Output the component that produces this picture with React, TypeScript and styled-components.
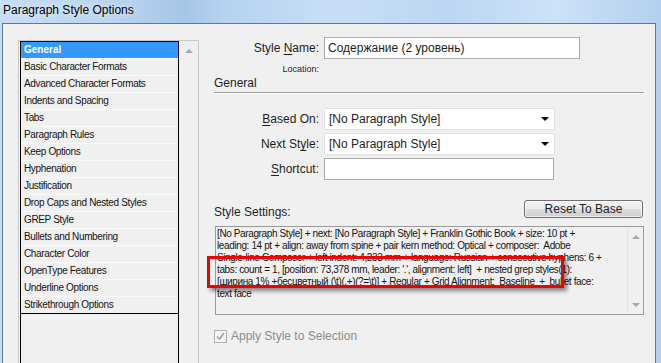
import styled, { createGlobalStyle } from "styled-components";

const GlobalStyle = createGlobalStyle`
  html, body {
    margin: 0;
    padding: 0;
    width: 661px;
    height: 363px;
    overflow: hidden;
  }
  body {
    font-family: "Liberation Sans", Arial, sans-serif;
    color: #1e1e1e;
  }
`;

const Window = styled.div`
  width: 661px;
  height: 363px;
  display: flex;
  flex-direction: column;
  background: linear-gradient(
    90deg,
    #c6ddf3 0%,
    #b9d4ef 18%,
    #a7c5e6 28%,
    #b6d2ef 34%,
    #c7dff6 50%,
    #bcd7f2 68%,
    #cbe2f8 84%,
    #b4d0ee 100%
  );
`;

const TitleBar = styled.div`
  height: 23px;
  line-height: 21px;
  padding-left: 3px;
  font-size: 12px;
  color: #000;
  text-shadow: 0 0 6px rgba(255, 255, 255, 0.9);
`;

const Body = styled.div`
  flex: 1;
  display: flex;
  margin: 0 5px 0 2px;
  padding: 0 11px 0 15px;
  border: 1px solid #67778a;
  border-bottom: none;
  background: #f0f0f0;
  overflow: hidden;
`;

/* ---------- left category list ---------- */

const Sidebar = styled.div`
  width: 178px;
  margin-top: 16px;
  display: flex;
  border: 1px solid #c9c9c9;
  border-bottom: none;
  padding: 0 0 0 1px;
`;

const List = styled.div`
  width: 157px;
  border: 1px solid #000;
  border-bottom: none;
`;

const Rows = styled.div`
  border-bottom: 1px solid #000;
`;

const Row = styled.div<{ $selected?: boolean }>`
  height: 16px;
  line-height: 16px;
  padding-left: 3px;
  font-size: 10px;
  letter-spacing: ${(p) => (p.$selected ? "0" : "-0.35px")};
  white-space: nowrap;
  border-bottom: 1px solid #fbfbfb;
  background: ${(p) => (p.$selected ? "#3399ff" : "#f0f0f0")};
  color: ${(p) => (p.$selected ? "#fff" : "#141414")};
  font-weight: ${(p) => (p.$selected ? 700 : 400)};

  &:last-child {
    border-bottom: none;
  }
`;

const ListScroll = styled.div`
  flex: 1;
  display: flex;
  justify-content: center;
  padding-top: 8px;
`;

const Arrow = styled.span<{ $down?: boolean; $color?: string }>`
  width: 0;
  height: 0;
  border-left: 4px solid transparent;
  border-right: 4px solid transparent;
  ${(p) =>
    p.$down
      ? `border-top: 4px solid ${p.$color || "#a8a8a8"};`
      : `border-bottom: 4px solid ${p.$color || "#a8a8a8"};`}
`;

/* ---------- right form ---------- */

const Main = styled.div`
  flex: 1;
  margin-left: 15px;
  padding-top: 13px;
  display: flex;
  flex-direction: column;
`;

const FieldRow = styled.div<{ $top?: number }>`
  display: flex;
  align-items: center;
  gap: 5px;
  margin-top: ${(p) => p.$top || 0}px;
`;

const Label = styled.label`
  width: 105px;
  text-align: right;
  font-size: 12px;
  color: #1e1e1e;

  u {
    text-decoration: underline;
    text-underline-offset: 2px;
  }
`;

const TextInput = styled.div<{ $width: number }>`
  width: ${(p) => p.$width}px;
  height: 22px;
  box-sizing: border-box;
  border: 1px solid #ababab;
  background: #fff;
  font-size: 12px;
  line-height: 20px;
  padding-left: 3px;
  color: #1e1e1e;
`;

const Select = styled.div`
  width: 231px;
  height: 22px;
  box-sizing: border-box;
  border: 1px solid #e0e0e0;
  border-radius: 2px;
  background: #fff;
  display: flex;
  align-items: center;
  justify-content: space-between;
  padding: 0 5px 0 4px;
  font-size: 12px;
  color: #1e1e1e;
`;

const Location = styled.div`
  width: 105px;
  margin-top: 5px;
  text-align: right;
  font-size: 9px;
  line-height: 11px;
  color: #1e1e1e;
`;

const SectionTitle = styled.div`
  font-size: 12px;
  line-height: 16px;
  padding-bottom: 1px;
  border-bottom: 1px solid #a0a0a0;
  box-shadow: 0 1px 0 #fff;
`;

const SettingsHead = styled.div`
  margin-top: 20px;
  display: flex;
  justify-content: space-between;
  align-items: flex-start;
  padding-right: 1px;
`;

const SettingsLabel = styled.div`
  font-size: 12px;
  line-height: 16px;
  padding-top: 4px;
`;

const Button = styled.button`
  width: 119px;
  height: 18px;
  padding: 0;
  border: 1px solid #707070;
  border-radius: 3px;
  background: linear-gradient(#f2f2f2 0%, #ebebeb 49%, #dddddd 50%, #cfcfcf 100%);
  font-family: "Liberation Sans", Arial, sans-serif;
  font-size: 12px;
  line-height: 15px;
  color: #1e1e1e;
  box-shadow: inset 0 0 0 1px rgba(255, 255, 255, 0.7);
`;

const SettingsBox = styled.div`
  position: relative;
  margin: 6px 0 0 1px;
  height: 89px;
  box-sizing: border-box;
  border: 1px solid #9a9a9a;
  display: flex;
`;

const SettingsText = styled.div`
  flex: 1;
  padding: 1px 0 0 1px;
  font-size: 10px;
  line-height: 12px;
  letter-spacing: -0.38px;
  white-space: pre;
  overflow: hidden;
  color: #141414;
`;

const TextScroll = styled.div`
  width: 15px;
  border-left: 1px solid #e4e4e4;
  display: flex;
  flex-direction: column;
  justify-content: space-between;
  align-items: center;
  padding: 8px 0 7px;
`;

const Highlight = styled.div`
  position: absolute;
  left: -9px;
  top: 29px;
  width: 357px;
  height: 32px;
  box-sizing: border-box;
  border: 3px solid #f00000;
  box-shadow: 3px 3px 4px rgba(0, 0, 0, 0.45);
  pointer-events: none;
`;

const CheckRow = styled.div`
  margin-top: 14px;
  display: flex;
  align-items: center;
  gap: 4px;
  font-size: 12px;
  color: #8d8d8d;
`;

const CheckBox = styled.span`
  width: 13px;
  height: 13px;
  box-sizing: border-box;
  border: 1px solid #b1b1b1;
  background: #f4f4f4;
  display: flex;
  align-items: center;
  justify-content: center;
`;

const categories = [
  "General",
  "Basic Character Formats",
  "Advanced Character Formats",
  "Indents and Spacing",
  "Tabs",
  "Paragraph Rules",
  "Keep Options",
  "Hyphenation",
  "Justification",
  "Drop Caps and Nested Styles",
  "GREP Style",
  "Bullets and Numbering",
  "Character Color",
  "OpenType Features",
  "Underline Options",
  "Strikethrough Options",
];

const settingsLines = [
  "[No Paragraph Style] + next: [No Paragraph Style] + Franklin Gothic Book + size: 10 pt +",
  "leading: 14 pt + align: away from spine + pair kern method: Optical + composer:  Adobe",
  "Single-line Composer + left indent: 4,233 mm + language: Russian + consecutive hyphens: 6 +",
  "tabs: count = 1, [position: 73,378 mm, leader: '.', alignment: left]  + nested grep styles(1):",
  "[ширина 1% +бесцветный (\\t)(.+)(?=\\t)] + Regular + Grid Alignment:  Baseline  +  bullet face:",
  "text face",
];

export default function App() {
  return (
    <>
      <GlobalStyle />
      <Window>
        <TitleBar>Paragraph Style Options</TitleBar>
        <Body>
          <Sidebar>
            <List>
              <Rows>
                {categories.map((c, i) => (
                  <Row key={c} $selected={i === 0}>
                    {c}
                  </Row>
                ))}
              </Rows>
            </List>
            <ListScroll>
              <Arrow />
            </ListScroll>
          </Sidebar>

          <Main>
            <FieldRow>
              <Label>
                Style <u>N</u>ame:
              </Label>
              <TextInput $width={256}>Содержание (2 уровень)</TextInput>
            </FieldRow>
            <Location>Location:</Location>
            <SectionTitle>General</SectionTitle>

            <FieldRow $top={15}>
              <Label>
                <u>B</u>ased On:
              </Label>
              <Select>
                [No Paragraph Style]
                <Arrow $down $color="#000" />
              </Select>
            </FieldRow>
            <FieldRow $top={3}>
              <Label>
                Next St<u>y</u>le:
              </Label>
              <Select>
                [No Paragraph Style]
                <Arrow $down $color="#000" />
              </Select>
            </FieldRow>
            <FieldRow $top={3}>
              <Label>
                <u>S</u>hortcut:
              </Label>
              <TextInput $width={230} />
            </FieldRow>

            <SettingsHead>
              <SettingsLabel>Style Settings:</SettingsLabel>
              <Button>Reset To Base</Button>
            </SettingsHead>
            <SettingsBox>
              <SettingsText>{settingsLines.join("\n")}</SettingsText>
              <TextScroll>
                <Arrow />
                <Arrow $down />
              </TextScroll>
              <Highlight />
            </SettingsBox>

            <CheckRow>
              <CheckBox>
                <svg width="9" height="9" viewBox="0 0 9 9">
                  <path d="M1 4.5 L3.5 7 L8 1" fill="none" stroke="#a0a0a0" strokeWidth="1.6" />
                </svg>
              </CheckBox>
              Apply Style to Selection
            </CheckRow>
          </Main>
        </Body>
      </Window>
    </>
  );
}
